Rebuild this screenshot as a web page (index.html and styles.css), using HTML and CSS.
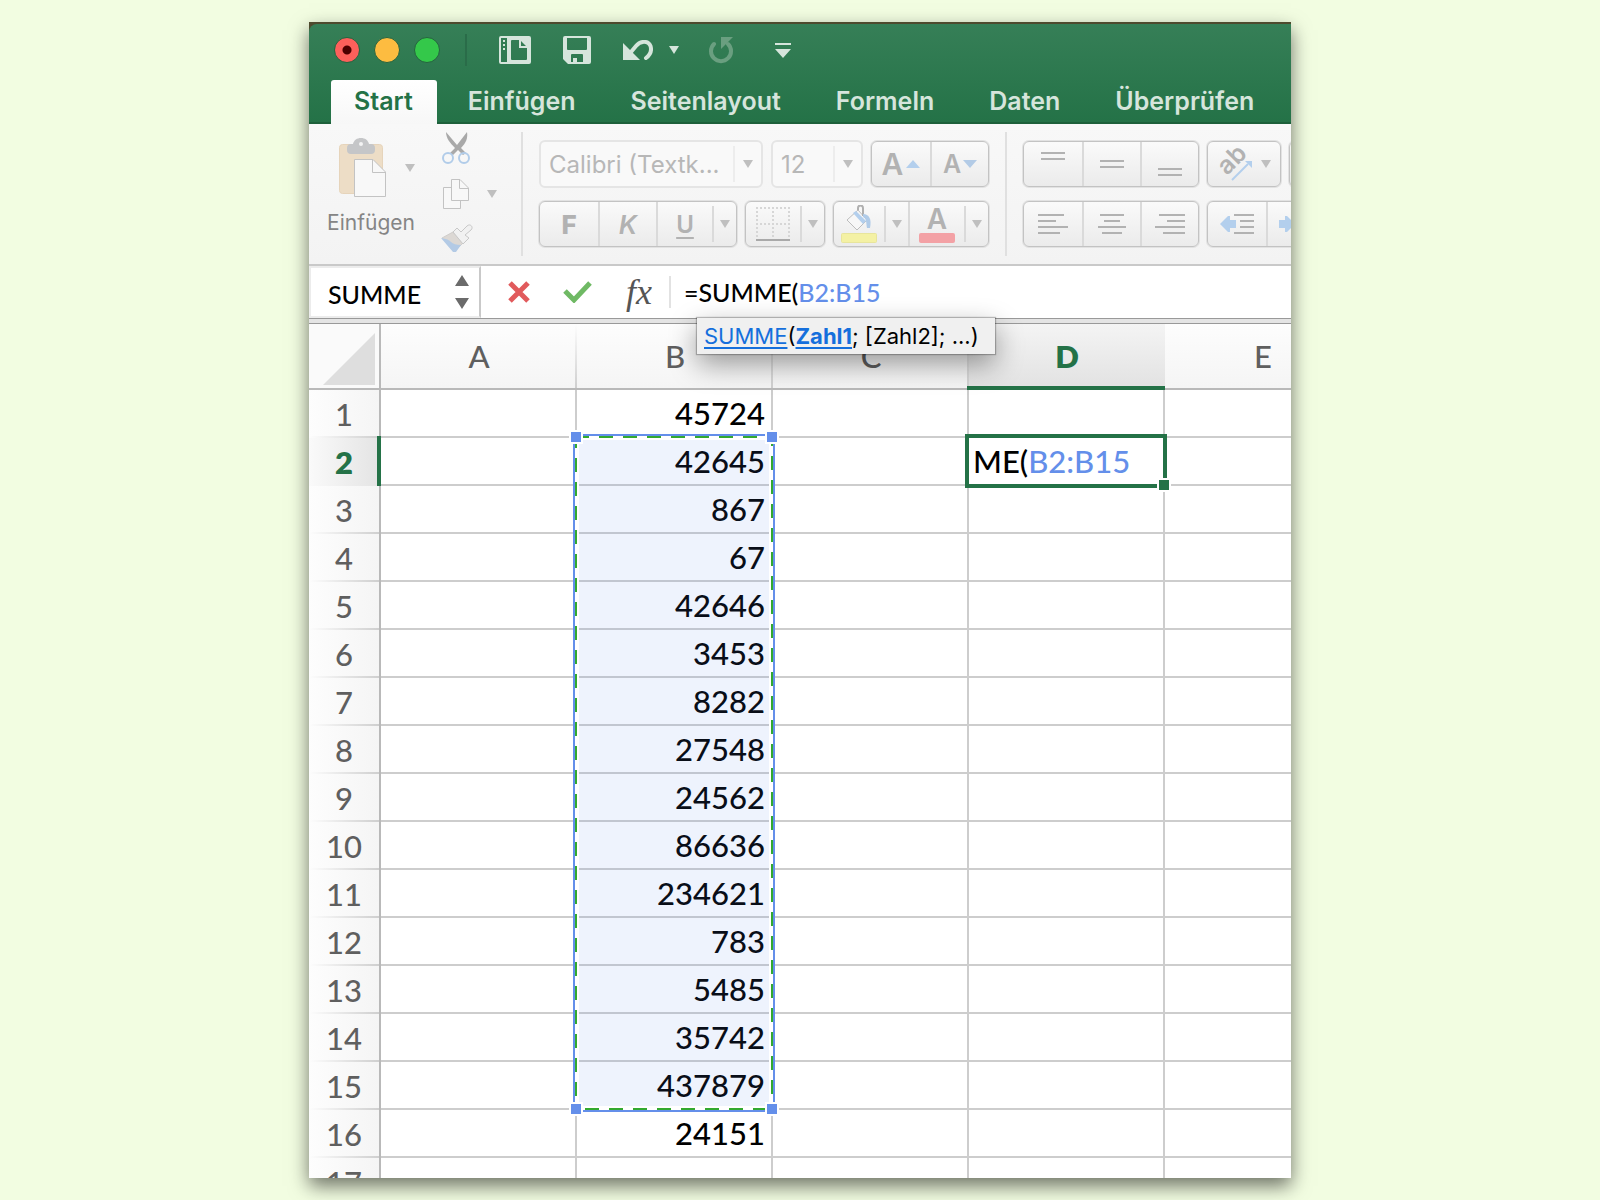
FILE: index.html
```html
<!DOCTYPE html>
<html lang="de">
<head>
<meta charset="utf-8">
<title>Excel – Summe</title>
<link rel="stylesheet" href="styles.css">
</head>
<body>
<main class="window">
  <header class="header">
    <div class="titlebar">
      <div class="lights">
        <button class="light light-close" aria-label="Schließen"></button>
        <button class="light light-min" aria-label="Minimieren"></button>
        <button class="light light-max" aria-label="Maximieren"></button>
      </div>
      <span class="title-sep"></span>
      <button class="quick" aria-label="Katalog">
        <svg width="32" height="28" viewBox="0 0 32 28"><path fill="#d6e5dc" fill-rule="evenodd" d="M2 0H30a2 2 0 0 1 2 2V26a2 2 0 0 1-2 2H2a2 2 0 0 1-2-2V2a2 2 0 0 1 2-2ZM2 2V26H8V2ZM13 4a1 1 0 0 0-1 1V23a1 1 0 0 0 1 1H27a1 1 0 0 0 1-1V12H20V4ZM22 5V10H27Z"/><path fill="#d6e5dc" d="M4 4h2v2H4zM4 8h2v2H4zM4 12h2v2H4z"/></svg>
      </button>
      <button class="quick" aria-label="Sichern">
        <svg width="28" height="28" viewBox="0 0 28 28"><path fill="#d6e5dc" fill-rule="evenodd" d="M2 0H26a2 2 0 0 1 2 2V26a2 2 0 0 1-2 2H5L0 23V2a2 2 0 0 1 2-2ZM4 2V13a1 1 0 0 0 1 1H23a1 1 0 0 0 1-1V2ZM9 18a1 1 0 0 0-1 1V26H10V22H14V26H20V19a1 1 0 0 0-1-1Z"/></svg>
      </button>
      <button class="quick quick-undo" aria-label="Widerrufen">
        <svg width="30" height="21" viewBox="0 0 30 21"><path fill="#d6e5dc" d="M0 3V20H17Z"/><path fill="none" stroke="#d6e5dc" stroke-width="4" stroke-linecap="round" d="M8 12L13 6C17 1 25 0 27.500 6C29 11 27 15 23 18"/></svg>
        <svg width="10" height="8" viewBox="0 0 10 8"><path fill="#d6e5dc" d="M0 0H10L5 8Z"/></svg>
      </button>
      <button class="quick quick-redo" aria-label="Wiederholen">
        <svg width="26" height="28" viewBox="0 0 26 28"><path fill="#6a9f80" d="M12 1H24L12 13Z"/><path fill="none" stroke="#6a9f80" stroke-width="4" stroke-linecap="round" d="M5 8A10 10 0 1 0 19 8"/></svg>
      </button>
      <button class="quick quick-more" aria-label="Anpassen">
        <svg width="16" height="15" viewBox="0 0 16 15"><path fill="#d6e5dc" d="M0 0H16V2H0ZM0 6H16L8 15Z"/></svg>
      </button>
    </div>
    <nav class="tabs">
      <a class="tab tab-active" href="#start">Start</a>
      <a class="tab" href="#einfuegen">Einfügen</a>
      <a class="tab" href="#layout">Seitenlayout</a>
      <a class="tab" href="#formeln">Formeln</a>
      <a class="tab" href="#daten">Daten</a>
      <a class="tab" href="#pruefen">Überprüfen</a>
    </nav>
  </header>

  <section class="ribbon">
    <button class="paste">
      <span class="paste-icons">
        <svg width="48" height="60" viewBox="0 0 48 60"><rect x=".5" y="6.500" width="43" height="49" rx="3" fill="#edddc6" stroke="#e6d4bb"/><path fill="#c5c6c8" d="M14 6C15 2 18 0 22 0S29 2 30 6H32a4 4 0 0 1 4 4V12a4 4 0 0 1-4 4H12a4 4 0 0 1-4-4V10a4 4 0 0 1 4-4Z"/><circle cx="22" cy="6" r="2" fill="#f4f4f4"/><path fill="#f8f8f8" stroke="#c3c3c3" d="M15.500 21.500H34L46.500 34V58.500H15.500Z"/><path fill="none" stroke="#c3c3c3" d="M33.500 22V34.500H46"/></svg>
        <svg class="caret" width="10" height="8" viewBox="0 0 10 8"><path d="M0 0H10L5 8Z"/></svg>
      </span>
      <span>Einfügen</span>
    </button>
    <div class="clip">
      <button aria-label="Ausschneiden">
        <svg width="32" height="32" viewBox="0 0 32 32"><path fill="#a9a9a9" d="M5 0C5 6 9 11 14 16L9 21L12 23L17 18L22 23L25 21L20 16C25 11 27 6 26 0L16 13Z"/><circle cx="7" cy="26" r="5" fill="none" stroke="#b1cce9" stroke-width="2"/><circle cx="23" cy="26" r="5" fill="none" stroke="#b1cce9" stroke-width="2"/></svg>
      </button>
      <button aria-label="Kopieren">
        <svg width="32" height="32" viewBox="0 0 32 32"><path fill="#f8f8f8" stroke="#c3c3c3" d="M2.500 9.500H19.500V30.500H2.500Z"/><path fill="#f8f8f8" stroke="#c3c3c3" d="M10.500 1.500H19L27.500 10V22.500H10.500Z"/><path fill="none" stroke="#c3c3c3" d="M18.500 2V10.500H27"/></svg>
        <svg class="caret" width="10" height="8" viewBox="0 0 10 8"><path d="M0 0H10L5 8Z"/></svg>
      </button>
      <button aria-label="Format übertragen">
        <svg width="32" height="28" viewBox="0 0 32 28"><path fill="#dcd8d4" stroke="#d0cecb" d="M1 14L12 8L22 19L14 27Z"/><path fill="#b3cae5" d="M0 14Q8 15 10 18Q13 21 20 21L15 28H12Z"/><path fill="#f1f1f1" stroke="#c8c8c8" d="M12 8L16 4L20 8L26 2C29 -1 33 3 30 6L24 11L28 14L22 20Z"/></svg>
      </button>
    </div>
    <span class="ribbon-sep"></span>
    <div class="rows">
      <div class="row">
        <label class="combo combo-font">
          <select aria-label="Schriftart"><option>Calibri (Textk...</option></select>
          <svg class="caret" width="10" height="8" viewBox="0 0 10 8"><path d="M0 0H10L5 8Z"/></svg>
        </label>
        <label class="combo combo-size">
          <select aria-label="Schriftgrad"><option>12</option></select>
          <svg class="caret" width="10" height="8" viewBox="0 0 10 8"><path d="M0 0H10L5 8Z"/></svg>
        </label>
        <div class="group">
          <button class="seg letter-big">A<svg width="14" height="8" viewBox="0 0 14 8"><path fill="#b3cfed" d="M0 8L7 0L14 8Z"/></svg></button>
          <button class="seg letter-small">A<svg width="14" height="8" viewBox="0 0 14 8"><path fill="#b3cbe6" d="M0 0H14L7 8Z"/></svg></button>
        </div>
      </div>
      <div class="row">
        <div class="group">
          <button class="seg bold">F</button>
          <button class="seg italic">K</button>
          <button class="seg seg-main underline">U</button>
          <button class="drop" aria-label="Unterstreichung"><svg class="caret" width="10" height="8" viewBox="0 0 10 8"><path d="M0 0H10L5 8Z"/></svg></button>
        </div>
        <div class="group">
          <button class="seg seg-main" aria-label="Rahmen">
            <svg width="34" height="34" viewBox="0 0 34 34"><path fill="none" stroke="#d6d6d6" stroke-width="2" stroke-dasharray="2 2" d="M0 1H34M1 4V31M17 4V31M33 4V31M0 17H34"/><path fill="#a9a9a9" d="M0 32H34V34H0Z"/></svg>
          </button>
          <button class="drop" aria-label="Rahmenart"><svg class="caret" width="10" height="8" viewBox="0 0 10 8"><path d="M0 0H10L5 8Z"/></svg></button>
        </div>
        <div class="group">
          <button class="seg seg-fill" aria-label="Füllfarbe">
            <svg width="36" height="38" viewBox="0 0 36 38"><path fill="#f7f7f7" stroke="#bdbdbd" d="M17 5L26 15L16 25L6 15Z"/><path fill="#b3cfed" d="M12 8L15 6L25 16L22 19Z"/><path fill="none" stroke="#b0b0b0" stroke-width="2" d="M17 5V3a2.500 2.500 0 0 1 5 0V11"/><path fill="#b0cbe8" d="M22 9C28 9 31 14 29 23H26C25 18 26 14 22 12Z"/><rect x=".5" y="28.500" width="35" height="9" rx="1" fill="#f4f1a4" stroke="#e8e59c"/></svg>
          </button>
          <button class="drop" aria-label="Füllfarbe wählen"><svg class="caret" width="10" height="8" viewBox="0 0 10 8"><path d="M0 0H10L5 8Z"/></svg></button>
          <button class="seg seg-main fontcolor"><span>A</span><i class="swatch"></i></button>
          <button class="drop" aria-label="Schriftfarbe wählen"><svg class="caret" width="10" height="8" viewBox="0 0 10 8"><path d="M0 0H10L5 8Z"/></svg></button>
        </div>
      </div>
    </div>
    <span class="ribbon-sep"></span>
    <div class="rows">
      <div class="row">
        <div class="group">
          <button class="seg" aria-label="Oben"><svg class="lines" width="30" height="26" viewBox="0 0 30 26"><path d="M3 2H27M3 8H27"/></svg></button>
          <button class="seg" aria-label="Mitte"><svg class="lines" width="30" height="26" viewBox="0 0 30 26"><path d="M3 10H27M3 16H27"/></svg></button>
          <button class="seg" aria-label="Unten"><svg class="lines" width="30" height="26" viewBox="0 0 30 26"><path d="M3 18H27M3 24H27"/></svg></button>
        </div>
        <div class="group">
          <button class="seg seg-orient" aria-label="Ausrichtung">
            <svg width="36" height="36" viewBox="0 0 36 36"><text class="ab" transform="translate(10 30) rotate(-45)">ab</text><path stroke="#b3cfed" stroke-width="2" d="M15 34L31 18"/><path fill="#b3cfed" d="M28 15H35V22Z"/></svg>
            <svg class="caret" width="10" height="8" viewBox="0 0 10 8"><path d="M0 0H10L5 8Z"/></svg>
          </button>
        </div>
        <div class="group"><button class="seg" aria-label="Umbruch"></button></div>
      </div>
      <div class="row">
        <div class="group">
          <button class="seg" aria-label="Linksbündig"><svg class="lines" width="30" height="20" viewBox="0 0 30 20"><path d="M0 1H26M0 7H18M0 13H30M0 19H22"/></svg></button>
          <button class="seg" aria-label="Zentriert"><svg class="lines" width="30" height="20" viewBox="0 0 30 20"><path d="M3 1H27M7 7H23M1 13H29M5 19H25"/></svg></button>
          <button class="seg" aria-label="Rechtsbündig"><svg class="lines" width="30" height="20" viewBox="0 0 30 20"><path d="M4 1H30M12 7H30M0 13H30M8 19H30"/></svg></button>
        </div>
        <div class="group">
          <button class="seg" aria-label="Einzug verkleinern"><svg class="lines" width="34" height="20" viewBox="0 0 34 20"><path d="M14 1H34M20 7H34M20 13H34M14 19H34"/><path class="arrow" d="M0 10L8 2H10V6H16V14H10V18H8Z"/></svg></button>
          <button class="seg" aria-label="Einzug vergrößern"><svg class="lines" width="34" height="20" viewBox="0 0 34 20"><path d="M18 1H34M22 7H34M22 13H34M18 19H34"/><path class="arrow" d="M16 10L8 2H6V6H0V14H6V18H8Z"/></svg></button>
        </div>
      </div>
    </div>
  </section>

  <section class="formula-bar">
    <div class="namebox">
      <input type="text" value="SUMME" aria-label="Namenfeld">
      <svg width="14" height="34" viewBox="0 0 14 34"><path fill="#6b6b6b" d="M0 11L7 0L14 11ZM0 23H14L7 34Z"/></svg>
    </div>
    <div class="formula-tools">
      <button aria-label="Abbrechen"><svg width="22" height="22" viewBox="0 0 22 22"><path fill="none" stroke="#e15a5c" stroke-width="5" d="M2 2L20 20M20 2L2 20"/></svg></button>
      <button aria-label="Eingeben"><svg width="30" height="22" viewBox="0 0 30 22"><path fill="none" stroke="#6fb964" stroke-width="5" d="M3 10L12 19L28 2"/></svg></button>
      <button class="fx">fx</button>
    </div>
    <div class="formula">
      <span role="textbox" aria-label="Formel">=SUMME(<span class="ref">B2:B15</span></span>
      <div class="tooltip"><a href="#summe">SUMME</a>(<a href="#zahl1"><b>Zahl1</b></a>; [Zahl2]; ...)</div>
    </div>
  </section>
  <div class="splitter"></div>

  <section class="sheet">
    <table>
      <colgroup><col class="c-head"><col class="c"><col class="c"><col class="c"><col class="c"><col class="c"></colgroup>
      <thead>
        <tr><th class="corner"><svg width="52" height="52" viewBox="0 0 52 52"><path fill="#dedede" d="M52 0V52H0Z"/></svg></th><th>A</th><th>B</th><th>C</th><th class="active">D</th><th>E</th></tr>
      </thead>
      <tbody>
        <tr><th>1</th><td></td><td>45724</td><td></td><td></td><td></td></tr>
        <tr><th class="active">2</th><td></td><td class="anchor">42645
          <svg class="range" width="210" height="686" viewBox="0 0 210 686">
            <rect x="10" y="10" width="190" height="666" fill="#5b8bec" fill-opacity=".1"/>
            <path fill="none" stroke="#fff" stroke-width="4" d="M8 8H202V678H8Z"/>
            <rect x="5" y="5" width="200" height="676" fill="none" stroke="#648fea" stroke-width="2"/>
            <path fill="none" stroke="#33a92f" stroke-width="2" stroke-dasharray="14 10" d="M6 7H202M7 4V680M203 2V680M16 679H202"/>
            <path fill="#fff" d="M0 0H14V14H0ZM196 0H210V14H196ZM0 672H14V686H0ZM196 672H210V686H196Z"/>
            <path fill="#648fea" d="M2 2H12V12H2ZM198 2H208V12H198ZM2 674H12V684H2ZM198 674H208V684H198Z"/>
          </svg></td><td></td><td class="anchor editing">ME(<span class="ref">B2:B15</span><i class="frame"></i><i class="handle"></i></td><td></td></tr>
        <tr><th>3</th><td></td><td>867</td><td></td><td></td><td></td></tr>
        <tr><th>4</th><td></td><td>67</td><td></td><td></td><td></td></tr>
        <tr><th>5</th><td></td><td>42646</td><td></td><td></td><td></td></tr>
        <tr><th>6</th><td></td><td>3453</td><td></td><td></td><td></td></tr>
        <tr><th>7</th><td></td><td>8282</td><td></td><td></td><td></td></tr>
        <tr><th>8</th><td></td><td>27548</td><td></td><td></td><td></td></tr>
        <tr><th>9</th><td></td><td>24562</td><td></td><td></td><td></td></tr>
        <tr><th>10</th><td></td><td>86636</td><td></td><td></td><td></td></tr>
        <tr><th>11</th><td></td><td>234621</td><td></td><td></td><td></td></tr>
        <tr><th>12</th><td></td><td>783</td><td></td><td></td><td></td></tr>
        <tr><th>13</th><td></td><td>5485</td><td></td><td></td><td></td></tr>
        <tr><th>14</th><td></td><td>35742</td><td></td><td></td><td></td></tr>
        <tr><th>15</th><td></td><td>437879</td><td></td><td></td><td></td></tr>
        <tr><th>16</th><td></td><td>24151</td><td></td><td></td><td></td></tr>
        <tr><th>17</th><td></td><td></td><td></td><td></td><td></td></tr>
      </tbody>
    </table>
  </section>
</main>
</body>
</html>
```
FILE: styles.css
```css
* { box-sizing: border-box; }
body {
  margin: 0;
  padding: 22px 309px;
  background: #f2fde1;
  font-family: Inter, "Liberation Sans", sans-serif;
}
button {
  display: flex;
  align-items: center;
  justify-content: center;
  margin: 0;
  padding: 0;
  border: 0;
  background: none;
  font: inherit;
  color: inherit;
}
svg { display: block; flex: none; }

.window {
  display: flex;
  flex-direction: column;
  height: calc(100vh - 44px);
  background: #4e4a2e;
  box-shadow: 0 8px 18px rgba(0, 0, 0, .55);
}

/* Title bar and tabs */
.header {
  flex: none;
  margin-top: 2px;
  border-radius: 8px 0 0 0;
  border-bottom: 2px solid #1e603b;
  background: linear-gradient(#367f57, #247247);
}
.titlebar {
  display: flex;
  align-items: center;
  height: 56px;
  padding: 0 0 4px 25px;
}
.lights { display: flex; gap: 14px; }
.light {
  width: 26px;
  height: 26px;
  border: 1px solid #25633f;
  border-radius: 50%;
}
.light-close { background: radial-gradient(circle, #4c0000 4px, #fc605b 5px); }
.light-min { background: #fdbc40; }
.light-max { background: #34c84a; }
.title-sep { width: 2px; height: 32px; margin-left: 25px; background: #2a6c49; }
.quick { margin-left: 32px; }
.quick-undo { gap: 16px; }
.quick-redo { margin-left: 30px; }
.quick-more { margin-left: 40px; }
.tabs { display: flex; height: 42px; margin-left: 22px; gap: 55px; }
.tab {
  color: #d6e5dc;
  font-size: 25px;
  font-weight: 600;
  line-height: 42px;
  text-decoration: none;
}
.tab-active {
  height: 44px;
  margin-right: -24px;
  padding: 0 24px 0 23px;
  border-radius: 3px 3px 0 0;
  background: linear-gradient(#fff, #f7f7f7);
  color: #247247;
}

/* Ribbon */
.ribbon {
  display: flex;
  flex: none;
  height: 142px;
  padding: 8px 0 8px 17px;
  overflow: hidden;
  border-bottom: 2px solid #c9c9c9;
  background: linear-gradient(#f8f8f8, #f3f3f3);
}
.caret { fill: #bfbfbf; }
.paste {
  flex: none;
  flex-direction: column;
  justify-content: flex-start;
  width: 90px;
  height: 112px;
  padding-top: 6px;
  gap: 11px;
  color: #858585;
  font-size: 21px;
  line-height: 28px;
}
.paste-icons { display: flex; align-items: center; gap: 18px; padding-left: 12px; }
.clip {
  display: flex;
  flex: none;
  flex-direction: column;
  align-items: flex-start;
  gap: 14px;
  width: 56px;
  margin-left: 25px;
}
.clip button { gap: 14px; }
.ribbon-sep { flex: none; width: 2px; height: 124px; margin: 0 16px; background: #e0e0e0; }
.clip + .ribbon-sep { margin-left: 24px; }
.rows { display: flex; flex: none; flex-direction: column; gap: 12px; padding-top: 8px; }
.row { display: flex; align-items: center; gap: 8px; height: 48px; }
.combo {
  display: grid;
  grid-template-columns: 1fr 28px;
  align-items: center;
  height: 48px;
  border: 2px solid #e5e5e5;
  border-radius: 6px;
  background: #f9f9f9;
}
.combo select {
  grid-area: 1 / 1 / 2 / 3;
  height: 36px;
  padding: 0 0 0 8px;
  appearance: none;
  border: 0;
  background: linear-gradient(#ededed, #ededed) right 26px center / 2px 100% no-repeat;
  color: #b7b7b7;
  font: 24px Inter, "Liberation Sans", sans-serif;
  opacity: 1;
}
.combo .caret { grid-area: 1 / 2; margin-left: 10px; }
.combo-font { width: 224px; }
.combo-size { width: 92px; }
.group {
  display: flex;
  align-items: center;
  height: 46px;
  overflow: hidden;
  border: 1px solid #c3c3c3;
  border-radius: 6px;
  background: linear-gradient(#fafafa, #ebebeb);
  box-shadow: 0 0 0 1px #e2e2e2;
  color: #b2b2b2;
}
.seg { width: 58px; height: 44px; }
.seg + .seg, .drop + .seg { border-left: 2px solid #dadada; }
.seg-main { width: 56px; }
.seg:first-child.seg-main { width: 54px; }
.seg-fill { width: 50px; }
.seg-orient { width: 72px; gap: 8px; }
.drop { width: 24px; height: 36px; border-left: 2px solid #dadada; }
.letter-big { gap: 3px; font-size: 30px; font-weight: 600; }
.letter-small { gap: 2px; font-size: 25px; font-weight: 600; }
.bold { font-size: 26px; font-weight: 800; }
.italic { font-size: 26px; font-style: italic; font-weight: 600; }
.underline {
  font-size: 24px;
  font-weight: 600;
  text-decoration: underline;
  text-decoration-thickness: 2px;
  text-underline-offset: 4px;
}
.fontcolor { flex-direction: column; font-size: 28px; font-weight: 600; line-height: 28px; }
.swatch { width: 36px; height: 10px; border-radius: 2px; background: #f3a1a5; }
.lines { fill: none; stroke: #b2b2b2; stroke-width: 2; }
.arrow { fill: #b3cfed; stroke: none; }
.ab { fill: #b2b2b2; font: 600 25px Inter, sans-serif; }

/* Formula bar */
.formula-bar {
  display: flex;
  flex: none;
  height: 52px;
  background: #fff;
  font-family: Lato, "Liberation Sans", sans-serif;
  font-size: 25px;
  font-weight: 500;
}
.namebox {
  display: flex;
  align-items: center;
  width: 172px;
  padding-right: 10px;
  border: solid #ececec;
  border-width: 2px 0 2px 2px;
  border-right: 2px solid #c9c9c9;
}
.namebox input {
  flex: 1;
  min-width: 0;
  padding: 4px 0 0 17px;
  border: 0;
  background: none;
  color: #000;
  font: inherit;
}
.formula-tools {
  display: flex;
  align-items: center;
  gap: 32px;
  margin: 10px 0;
  padding: 0 15px 0 27px;
  border-right: 2px solid #e2e2e2;
}
.fx { width: 30px; color: #555; font: italic 36px/30px "Liberation Serif", serif; }
.formula { position: relative; flex: 1; padding-left: 13px; line-height: 52px; }
.ref { color: #648fea; }
.tooltip {
  position: absolute;
  z-index: 2;
  top: 52px;
  left: 26px;
  height: 36px;
  padding: 0 16px 0 7px;
  background: #f0f0f0;
  box-shadow: 0 0 1px 1px rgba(0, 0, 0, .25), 0 10px 28px rgba(0, 0, 0, .4);
  color: #000;
  font: 22px/36px Inter, "Liberation Sans", sans-serif;
  white-space: nowrap;
}
.tooltip a { color: #156fdc; text-decoration-thickness: 2px; text-underline-offset: 3px; }
.splitter {
  flex: none;
  height: 6px;
  border: solid #999;
  border-width: 1px 0;
  background: #e4e4e4;
}

/* Sheet */
.sheet {
  flex: 1;
  min-height: 0;
  overflow: hidden;
  background: #fff;
  font-family: Lato, "Liberation Sans", sans-serif;
  font-size: 31px;
  font-weight: 500;
}
table { width: 1052px; table-layout: fixed; border-spacing: 0; }
.c-head { width: 72px; }
.c { width: 196px; }
th, td { position: relative; height: 48px; padding: 0; line-height: 44px; }
th { color: #5f5f5f; font-weight: 500; }
td {
  padding-right: 6px;
  border: solid #cdcdcd;
  border-width: 0 2px 2px 0;
  text-align: right;
  line-height: 46px;
  position: static;
}
td.anchor { position: relative; }
thead th {
  height: 66px;
  border-bottom: 2px solid #b9b9b9;
  background:
    linear-gradient(#fdfdfd, #cfcfcf) right / 2px 100% no-repeat,
    linear-gradient(#fdfdfd, #f5f5f5);
}
thead .corner { border-right: 2px solid #b9b9b9; background: #fafafa; }
.corner svg { margin: 6px 0 0 14px; }
thead .active { background: linear-gradient(#f4f4f4, #e2e2e2); }
tbody th {
  border-right: 2px solid #b9b9b9;
  background:
    linear-gradient(90deg, #fdfdfd, #cfcfcf) bottom / 100% 2px no-repeat,
    linear-gradient(90deg, #fdfdfd, #f5f5f5);
}
tbody .active { background: linear-gradient(90deg, #fafafa, #e4e4e4); }
th.active { color: #247247; font-weight: 800; }
th.active::after { content: ""; position: absolute; background: #247247; }
thead .active::after { right: 0; bottom: -2px; left: -2px; height: 4px; }
tbody .active::after { top: -2px; right: -2px; bottom: 0; width: 4px; }
.range { position: absolute; top: -8px; left: -8px; }
td.editing { padding-left: 4px; text-align: left; }
.frame { position: absolute; inset: -4px; border: 4px solid #247247; }
.handle {
  position: absolute;
  right: -6px;
  bottom: -6px;
  width: 10px;
  height: 10px;
  background: #247247;
  box-shadow: 0 0 0 2px #fff;
}
```
